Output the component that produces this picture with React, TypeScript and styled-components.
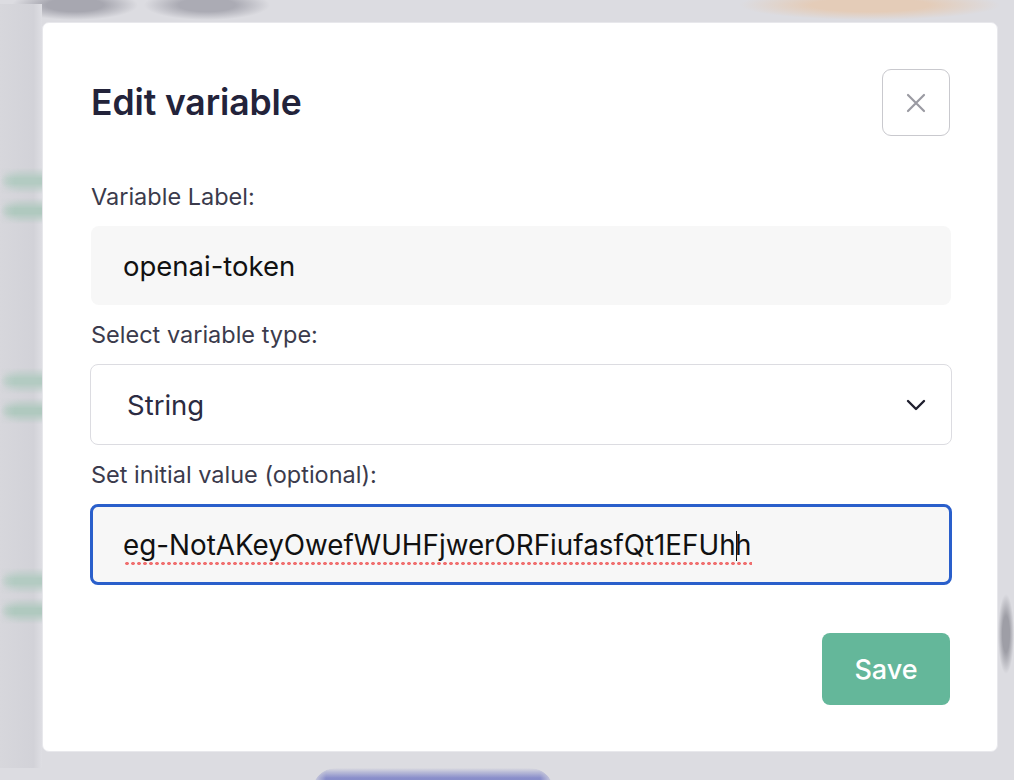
import React, { useState } from 'react';
import styled, { createGlobalStyle } from 'styled-components';

const GlobalStyle = createGlobalStyle`
  html, body {
    margin: 0;
    padding: 0;
    width: 100%;
    height: 100%;
    overflow: hidden;
    background: #dcdce1;
    font-family: Inter, "Noto Sans", "Liberation Sans", sans-serif;
  }
  * { box-sizing: border-box; }
`;

/* blurred page behind the modal */
const Backdrop = styled.div`
  width: 1014px;
  height: 780px;
  display: flex;
  flex-direction: column;
  overflow: hidden;
`;

const BackHeader = styled.div`
  display: flex;
  justify-content: space-between;
  align-items: flex-start;
  height: 14px;
  margin-top: -10px;
  padding: 0 14px 0 12px;
`;

const BackWords = styled.div`
  display: flex;
  gap: 6px;
`;

const Smudge = styled.div<{ $w: number; $color: string; $h: number }>`
  width: ${(p) => p.$w}px;
  height: ${(p) => p.$h}px;
  background: radial-gradient(closest-side, ${(p) => p.$color} 0%, ${(p) => p.$color} 45%, transparent 100%);
`;

const Stripe = styled.div<{ $color: string }>`
  height: 26px;
  background: radial-gradient(closest-side, ${(p) => p.$color} 30%, transparent 100%) 0 0 / 100% 100%,
    linear-gradient(90deg, transparent 0, ${(p) => p.$color} 20px);
  mask-image: linear-gradient(to bottom, transparent 0, #000 40%, #000 60%, transparent 100%);
`;

const BackBody = styled.div`
  display: flex;
  justify-content: space-between;
  flex: 1;
`;

const BackSide = styled.div`
  width: 42px;
  display: flex;
  flex-direction: column;
  padding-top: 164px;
  background: linear-gradient(90deg, #d7d7dc 0%, #d2d2d8 80%, #dedee3 100%);
`;

const BackCard = styled.div`
  display: flex;
  flex-direction: column;
  gap: 4px;
  height: 200px;
`;

const BackRight = styled.div`
  width: 16px;
  display: flex;
  flex-direction: column;
  padding-top: 590px;
`;

const BackFooter = styled.div`
  display: flex;
  padding-left: 312px;
  height: 26px;
  align-items: flex-end;
`;

const BackButton = styled.div`
  width: 242px;
  height: 26px;
  border-radius: 24px 24px 0 0;
  background: linear-gradient(to bottom, rgba(122, 128, 198, 0) 0, rgba(122, 128, 198, 0.85) 10px, #7a80c6 100%);
  mask-image: linear-gradient(90deg, transparent 0, #000 14px, #000 calc(100% - 14px), transparent 100%);
`;

const Modal = styled.div`
  position: fixed;
  top: 22px;
  left: 42px;
  width: 956px;
  height: 730px;
  background: #ffffff;
  border: 1px solid #e8e8ec;
  border-radius: 7px;
  padding: 46px 47px 0 47px;
  display: flex;
  flex-direction: column;
`;

const Header = styled.div`
  display: flex;
  justify-content: space-between;
  align-items: center;
  height: 67px;
  padding-left: 1px;
`;

const Title = styled.h2`
  margin: 0;
  font-size: 35.5px;
  font-weight: 600;
  color: #23233a;
  letter-spacing: -0.1px;
`;

const CloseButton = styled.button`
  width: 68px;
  height: 67px;
  border: 1.5px solid #c9c9ce;
  border-radius: 9px;
  background: #ffffff;
  display: flex;
  align-items: center;
  justify-content: center;
  padding: 0;
  cursor: pointer;
`;

const Field = styled.div<{ $top: number }>`
  display: flex;
  flex-direction: column;
  margin-top: ${(p) => p.$top}px;
`;

const Label = styled.label`
  font-size: 23.5px;
  color: #3b3b4c;
  line-height: 28px;
  margin-bottom: 15px;
  padding-left: 1px;
`;

const TextInput = styled.input`
  height: 79px;
  width: 860px;
  margin-left: 1px;
  border: none;
  border-radius: 8px;
  background: #f7f7f7;
  padding: 0 32px;
  font-family: Inter, "Noto Sans", "Liberation Sans", sans-serif;
  font-size: 27.5px;
  color: #111111;
  outline: none;
`;

/* focused input, drawn with its caret and spell-check underline */
const FocusedInput = styled.div`
  height: 81px;
  width: 862px;
  border: 3px solid #2a5fcb;
  border-radius: 8px;
  background: #f7f7f7;
  padding: 0 30px;
  display: flex;
  align-items: center;
  font-size: 27.8px;
  color: #111111;
  white-space: nowrap;
  cursor: text;
`;

const Misspelled = styled.span`
  padding-bottom: 4px;
  margin-bottom: -4px;
  background-image: radial-gradient(circle, #f07070 1.5px, transparent 2px);
  background-size: 6px 5px;
  background-repeat: repeat-x;
  background-position: 1px 100%;
`;

const Caret = styled.span`
  display: inline-block;
  width: 0;
  height: 30px;
  border-left: 1.5px solid #111111;
  vertical-align: -6px;
  margin-right: -1.5px;
`;

const SelectBox = styled.div`
  width: 862px;
  height: 81px;
  border: 1.5px solid #dcdce1;
  border-radius: 8px;
  background: #ffffff;
  display: flex;
  align-items: center;
  justify-content: space-between;
  padding: 0 25px 0 36px;
  font-size: 27.5px;
  color: #2b2b42;
`;

const Footer = styled.div`
  display: flex;
  justify-content: flex-end;
  margin-top: 48px;
`;

const SaveButton = styled.button`
  width: 128px;
  height: 72px;
  border: none;
  border-radius: 8px;
  background: #64b79a;
  color: #ffffff;
  font-family: Inter, "Noto Sans", "Liberation Sans", sans-serif;
  font-size: 27px;
  font-weight: 500;
  cursor: pointer;
`;

export default function App() {
  const [label, setLabel] = useState('openai-token');
  const value = 'eg-NotAKeyOwefWUHFjwerORFiufasfQt1EFUhh';

  return (
    <>
      <GlobalStyle />
      <Backdrop>
        <BackHeader>
          <BackWords>
            <Smudge $w={126} $color="#a7a7b0" $h={30} />
            <Smudge $w={126} $color="#ababb4" $h={30} />
          </BackWords>
          <Smudge $w={260} $color="#e4ccb8" $h={30} />
        </BackHeader>
        <BackBody>
          <BackSide>
            {[0, 1, 2].map((i) => (
              <BackCard key={i}>
                <Stripe $color="#b3cbc2" />
                <Stripe $color="#b0c9bf" />
              </BackCard>
            ))}
          </BackSide>
          <BackRight>
            <Smudge $w={16} $color="#9e9ea6" $h={80} />
          </BackRight>
        </BackBody>
        <BackFooter>
          <BackButton />
        </BackFooter>
      </Backdrop>
      <Modal>
        <Header>
          <Title>Edit variable</Title>
          <CloseButton aria-label="Close">
            <svg width="22" height="22" viewBox="0 0 22 22" fill="none">
              <path d="M3 3 L19 19 M19 3 L3 19" stroke="#9a9aa2" strokeWidth="2.2" strokeLinecap="round" />
            </svg>
          </CloseButton>
        </Header>
        <Field $top={47}>
          <Label>Variable Label:</Label>
          <TextInput value={label} onChange={(e) => setLabel(e.target.value)} />
        </Field>
        <Field $top={16}>
          <Label>Select variable type:</Label>
          <SelectBox>
            <span>String</span>
            <svg width="20" height="12" viewBox="0 0 20 12" fill="none">
              <path d="M2 2 L10 10 L18 2" stroke="#1f1f2e" strokeWidth="2.4" strokeLinecap="round" strokeLinejoin="round" />
            </svg>
          </SelectBox>
        </Field>
        <Field $top={16}>
          <Label>Set initial value (optional):</Label>
          <FocusedInput role="textbox">
            <Misspelled>
              {value.slice(0, -1)}
              <Caret />
              {value.slice(-1)}
            </Misspelled>
          </FocusedInput>
        </Field>
        <Footer>
          <SaveButton>Save</SaveButton>
        </Footer>
      </Modal>
    </>
  );
}
